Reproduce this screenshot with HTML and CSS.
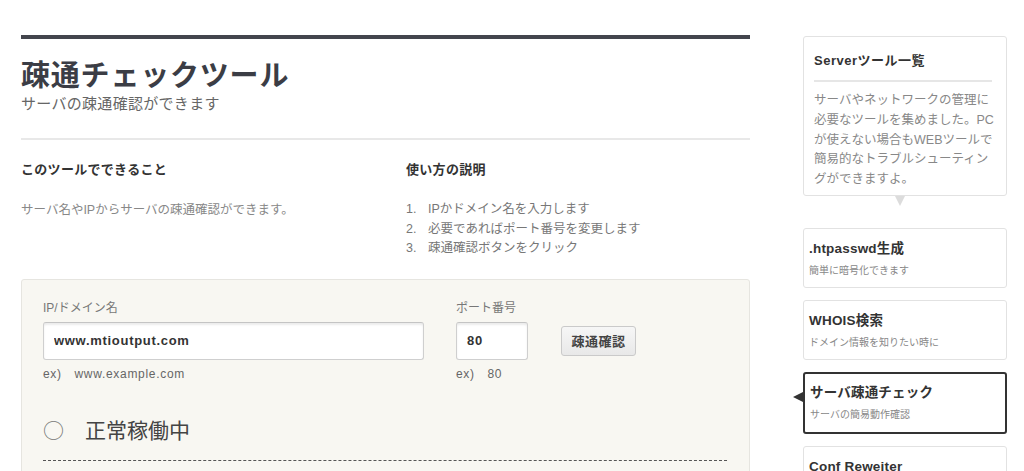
FILE: index.html
```html
<!DOCTYPE html>
<html lang="ja">
<head>
<meta charset="utf-8">
<title>疎通チェックツール</title>
<link rel="stylesheet" href="styles.css">
</head>
<body>
<div class="page">
  <main class="main">
    <div class="topbar"></div>
    <h1 class="title">疎通チェックツール</h1>
    <p class="subtitle">サーバの疎通確認ができます</p>
    <div class="sep"></div>
    <div class="cols">
      <section class="col">
        <h2 class="col-head">このツールでできること</h2>
        <p class="col-text">サーバ名やIPからサーバの疎通確認ができます。</p>
      </section>
      <section class="col">
        <h2 class="col-head">使い方の説明</h2>
        <ol class="steps">
          <li>IPかドメイン名を入力します</li>
          <li>必要であればポート番号を変更します</li>
          <li>疎通確認ボタンをクリック</li>
        </ol>
      </section>
    </div>
    <form class="form-box">
      <div class="fields">
        <div class="field field-host">
          <label class="label">IP/ドメイン名</label>
          <input class="input input-host" type="text" value="www.mtioutput.com">
          <div class="example">ex)　www.example.com</div>
        </div>
        <div class="field field-port">
          <label class="label">ポート番号</label>
          <div class="port-row">
            <input class="input input-port" type="text" value="80">
            <button class="btn" type="button">疎通確認</button>
          </div>
          <div class="example">ex)　80</div>
        </div>
      </div>
      <div class="status"><span class="status-mark">○</span>　正常稼働中</div>
      <div class="dashed"></div>
    </form>
  </main>
  <aside class="side">
    <div class="side-intro">
      <h3 class="intro-title">Serverツール一覧</h3>
      <div class="intro-hr"></div>
      <p class="intro-text">サーバやネットワークの管理に必要なツールを集めました。PCが使えない場合もWEBツールで簡易的なトラブルシューティングができますよ。</p>
    </div>
    <div class="tool">
      <div class="tool-name">.htpasswd生成</div>
      <div class="tool-desc">簡単に暗号化できます</div>
    </div>
    <div class="tool">
      <div class="tool-name">WHOIS検索</div>
      <div class="tool-desc">ドメイン情報を知りたい時に</div>
    </div>
    <div class="tool tool-active">
      <div class="tool-name">サーバ疎通チェック</div>
      <div class="tool-desc">サーバの簡易動作確認</div>
    </div>
    <div class="tool">
      <div class="tool-name">Conf Reweiter</div>
      <div class="tool-desc">設定ファイルを書き換え</div>
    </div>
  </aside>
</div>
</body>
</html>
```

FILE: styles.css
```css
html, body {
  margin: 0;
  padding: 0;
  overflow: hidden;
  background: #ffffff;
}

body {
  font-family: "Liberation Sans", "Noto Sans CJK JP", sans-serif;
  color: #333;
}

.page {
  display: flex;
  align-items: flex-start;
  gap: 53px;
  padding: 35px 18px 0 21px;
}

.main {
  width: 729px;
  flex: none;
}

.topbar {
  height: 4px;
  background: #43454d;
}

.title {
  margin: 20px 0 0;
  font-size: 29px;
  line-height: 34px;
  font-weight: bold;
  letter-spacing: 0.8px;
  color: #3b3d45;
}

.subtitle {
  margin: 0;
  font-size: 15px;
  line-height: 22px;
  letter-spacing: 0.3px;
  color: #666;
}

.sep {
  margin-top: 23px;
  height: 2px;
  background: #e8e8e8;
}

.cols {
  display: grid;
  grid-template-columns: 385px 1fr;
  margin-top: 20px;
}

.col-head {
  margin: 0;
  font-size: 13px;
  line-height: 20px;
  letter-spacing: 0.3px;
  font-weight: bold;
  color: #333;
}

.col-text {
  margin: 21px 0 0;
  font-size: 12.5px;
  line-height: 19.5px;
  color: #888;
}

.steps {
  list-style: none;
  margin: 20px 0 0;
  padding: 0;
  counter-reset: step;
  font-size: 12.5px;
  line-height: 19.5px;
  color: #777;
}

.steps li {
  counter-increment: step;
  display: flex;
}

.steps li::before {
  content: counter(step) ".";
  width: 22px;
  flex: none;
}

.form-box {
  margin: 20px 0 0;
  padding: 20px 22px 0 21px;
  height: 200px;
  background: #f8f7f2;
  border: 1px solid #e6e5e0;
  border-radius: 3px;
}

.fields {
  display: flex;
  gap: 32px;
}

.field {
  display: flex;
  flex-direction: column;
}

.label {
  font-size: 12px;
  line-height: 16px;
  color: #777;
  margin-bottom: 6px;
}

.input {
  box-sizing: border-box;
  height: 38px;
  padding: 0 10px;
  border: 1px solid #cfcfcf;
  border-top-color: #c4c4c4;
  border-radius: 3px;
  background: #fff;
  box-shadow: inset 0 2px 2px rgba(0, 0, 0, 0.08);
  font-family: "Liberation Sans", "Noto Sans CJK JP", sans-serif;
  font-size: 13px;
  font-weight: bold;
  letter-spacing: 0.7px;
  color: #333;
  outline: none;
}

.input-host {
  width: 381px;
}

.input-port {
  width: 72px;
}

.port-row {
  display: flex;
  align-items: center;
  gap: 33px;
}

.btn {
  box-sizing: border-box;
  width: 75px;
  height: 30px;
  padding: 0;
  border: 1px solid #cacaca;
  border-radius: 3px;
  background: linear-gradient(#f6f6f6, #e8e8e8);
  font-family: "Liberation Sans", "Noto Sans CJK JP", sans-serif;
  font-size: 13px;
  font-weight: bold;
  letter-spacing: 0.5px;
  color: #444;
}

.example {
  margin-top: 6px;
  font-size: 12px;
  line-height: 16px;
  letter-spacing: 0.7px;
  color: #666;
}

.status {
  margin-top: 33px;
  font-family: "Noto Sans CJK JP", sans-serif;
  font-size: 21px;
  line-height: 28px;
  color: #444;
}

.status-mark {
  color: #777;
}

.dashed {
  margin-top: 17px;
  border-top: 1px dashed #555;
}

.side {
  width: 204px;
  flex: none;
  display: flex;
  flex-direction: column;
  gap: 12px;
  padding-top: 1px;
}

.side-intro {
  position: relative;
  box-sizing: border-box;
  padding: 14px 11px 5px 10px;
  border: 1px solid #e2e2e2;
  border-radius: 3px;
  background: #fff;
  margin-bottom: 20px;
}

.side-intro::after {
  content: "";
  position: absolute;
  left: 91px;
  bottom: -11px;
  border-left: 5px solid transparent;
  border-right: 5px solid transparent;
  border-top: 10px solid #dcdcdc;
}

.intro-title {
  margin: 0;
  font-size: 13px;
  line-height: 20px;
  font-weight: bold;
  letter-spacing: 0.5px;
  color: #333;
}

.intro-hr {
  margin: 9px 3px 0 0;
  height: 2px;
  background: #e6e6e6;
}

.intro-text {
  margin: 9px 0 0;
  font-size: 12.5px;
  line-height: 19.8px;
  color: #888;
}

.tool {
  position: relative;
  box-sizing: border-box;
  height: 60px;
  padding: 10px 5px 0 5px;
  border: 1px solid #e2e2e2;
  border-radius: 3px;
  background: #fff;
}

.tool-name {
  font-size: 13.5px;
  line-height: 20px;
  font-weight: bold;
  letter-spacing: 0.2px;
  color: #333;
}

.tool-desc {
  margin-top: 5px;
  font-size: 10px;
  line-height: 14px;
  color: #888;
}

.tool-active {
  height: 62px;
  padding: 9px 5px 0 5px;
  border: 2px solid #333;
}

.tool-active::before {
  content: "";
  position: absolute;
  left: -12px;
  top: 18px;
  border-top: 5px solid transparent;
  border-bottom: 5px solid transparent;
  border-right: 10px solid #333;
}
```
